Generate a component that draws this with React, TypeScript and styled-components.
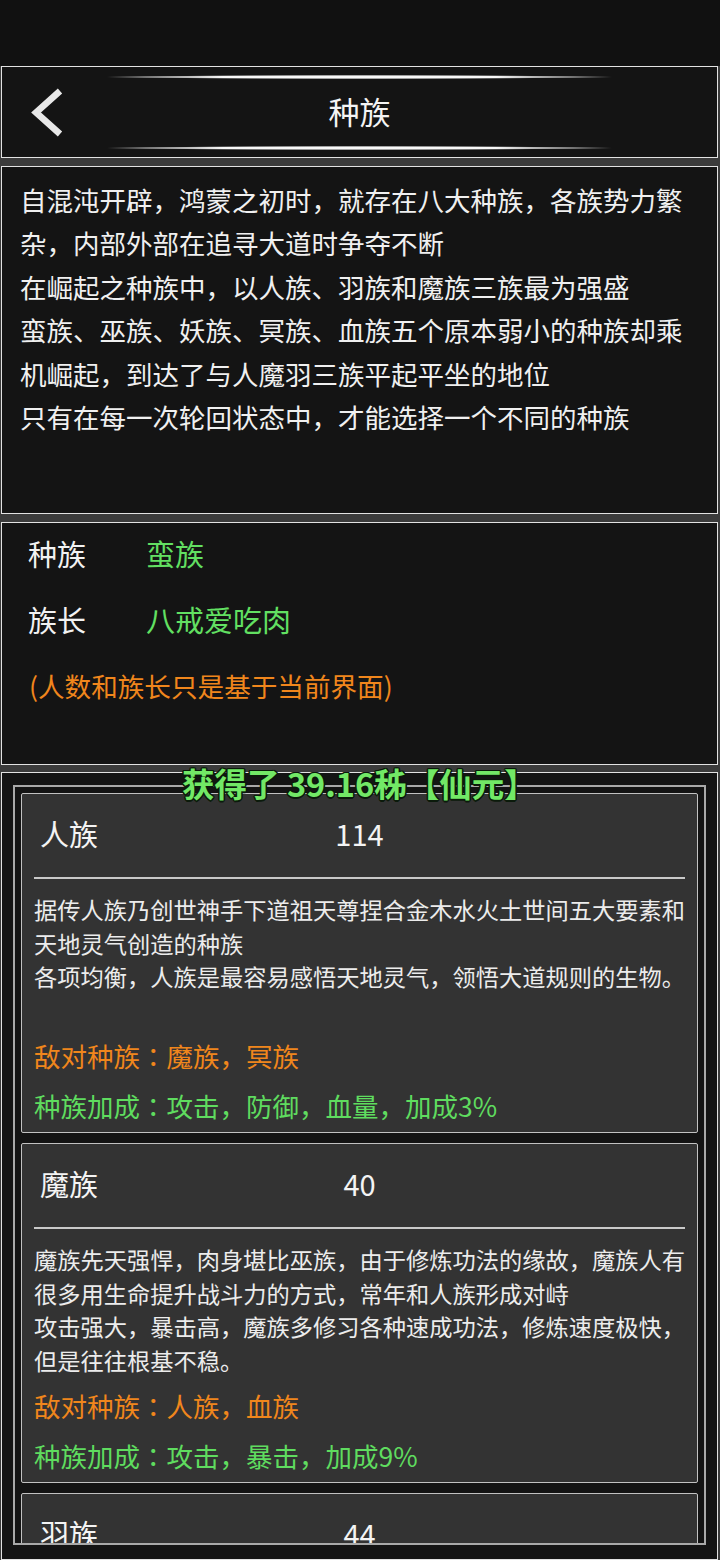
import React from 'react';
import styled, { createGlobalStyle } from 'styled-components';

const Global = createGlobalStyle`
  html, body { margin: 0; padding: 0; background: #3b3b3b; }
  body { font-family: "Noto Sans CJK SC", "Noto Sans", sans-serif; color: #f0f0f0; }
  * { box-sizing: border-box; }
`;

const Page = styled.div`
  width: 720px;
  height: 1560px;
  display: flex;
  flex-direction: column;
  overflow: hidden;
  background: #3b3b3b;
`;

const StatusBar = styled.div`
  flex: none;
  height: 66px;
  background: #111111;
`;

const Panel = styled.section<{ $h: number; $gap?: number }>`
  flex: none;
  position: relative;
  height: ${(p) => p.$h}px;
  margin: ${(p) => p.$gap ?? 0}px 2px 0 1px;
  background: #141414;
  border: 1px solid #e2e2e2;
`;

const HeaderGrid = styled.div`
  height: 100%;
  display: grid;
  grid-template-columns: 97px 1fr 97px;
`;

const BackButton = styled.button`
  align-self: center;
  justify-self: start;
  margin-left: 24px;
  padding: 0;
  border: 0;
  background: none;
  width: 50px;
  height: 60px;
  display: flex;
`;

const HeaderCenter = styled.div`
  display: flex;
  flex-direction: column;
  padding: 8px 0 7px;
`;

const GlowLine = styled.div`
  flex: none;
  height: 4px;
  background: radial-gradient(closest-side, #f8f8f8 58%, rgba(255, 255, 255, 0.4) 86%, rgba(255, 255, 255, 0) 100%);
`;

const Title = styled.h1`
  flex: 1;
  margin: 0;
  padding-bottom: 5px;
  display: flex;
  align-items: center;
  justify-content: center;
  font-size: 31px;
  font-weight: 400;
  color: #f4f4f4;
  line-height: 1;
`;

const Intro = styled.div`
  padding: 11px 10px 0 18px;
  font-size: 26.5px;
  line-height: 43.4px;
  color: #f0f0f0;
  white-space: nowrap;
`;

const InfoBody = styled.div`
  margin-top: -3px;
  padding: 0 0 0 26px;
  display: flex;
  flex-direction: column;
`;

const InfoRow = styled.div`
  height: 66px;
  display: flex;
  align-items: center;
  font-size: 29px;
`;

const InfoLabel = styled.span`
  width: 118px;
  color: #f2f2f2;
`;

const InfoValue = styled.span`
  color: #62e062;
`;

const Note = styled.div`
  height: 66px;
  display: flex;
  align-items: center;
  padding-left: 1px;
  font-size: 26.6px;
  color: #f0861c;
`;

const ListBody = styled.div`
  padding: 12px 11px 0;
`;

const Frame = styled.div`
  height: 760px;
  border: 2px solid #a9a9a9;
  padding: 6px;
  overflow: hidden;
  display: flex;
  flex-direction: column;
  gap: 10px;
`;

const Card = styled.div`
  flex: none;
  background: #333333;
  border: 1px solid #c2c2c2;
  border-radius: 2px;
  padding: 0 12px 2px;
`;

const CardHead = styled.div`
  height: 83px;
  padding-bottom: 5px;
  display: grid;
  grid-template-columns: 1fr auto 1fr;
  align-items: center;
  font-size: 29px;
  color: #f4f4f4;
`;

const RaceName = styled.span`
  padding-left: 6px;
`;

const RaceCount = styled.span`
  text-align: center;
`;

const Divider = styled.div`
  height: 2px;
  background: #c9c9c9;
`;

const CardDesc = styled.div`
  margin: 14px 0 3px;
  min-height: 134px;
  font-size: 23.25px;
  line-height: 33.5px;
  color: #ececec;
  white-space: nowrap;
`;

const Stat = styled.div<{ $tone: 'enemy' | 'bonus' }>`
  height: 50px;
  display: flex;
  align-items: center;
  font-size: 26.5px;
  white-space: pre;
  color: ${(p) => (p.$tone === 'enemy' ? '#f0861c' : '#5fdc5f')};
`;

const Colon = styled.span`
  font-family: "Noto Sans CJK JP", "Noto Sans CJK SC", sans-serif;
`;

const Toast = styled.div`
  position: absolute;
  top: -7px;
  left: 180px;
  font-size: 32.5px;
  font-weight: 700;
  line-height: 33px;
  color: #72e866;
  white-space: nowrap;
  text-shadow:
    1.5px 0 0 #0b1a0b, -1.5px 0 0 #0b1a0b, 0 1.5px 0 #0b1a0b, 0 -1.5px 0 #0b1a0b,
    1px 1px 0 #0b1a0b, -1px -1px 0 #0b1a0b, 1px -1px 0 #0b1a0b, -1px 1px 0 #0b1a0b;
`;

const introLines = [
  '自混沌开辟，鸿蒙之初时，就存在八大种族，各族势力繁',
  '杂，内部外部在追寻大道时争夺不断',
  '在崛起之种族中，以人族、羽族和魔族三族最为强盛',
  '蛮族、巫族、妖族、冥族、血族五个原本弱小的种族却乘',
  '机崛起，到达了与人魔羽三族平起平坐的地位',
  '只有在每一次轮回状态中，才能选择一个不同的种族',
];

type Race = { name: string; count: number; desc: string[]; enemy: string; bonus: string };

const races: Race[] = [
  {
    name: '人族',
    count: 114,
    desc: [
      '据传人族乃创世神手下道祖天尊捏合金木水火土世间五大要素和',
      '天地灵气创造的种族',
      '各项均衡，人族是最容易感悟天地灵气，领悟大道规则的生物。',
    ],
    enemy: '魔族，冥族',
    bonus: '攻击，防御，血量，加成3%',
  },
  {
    name: '魔族',
    count: 40,
    desc: [
      '魔族先天强悍，肉身堪比巫族，由于修炼功法的缘故，魔族人有',
      '很多用生命提升战斗力的方式，常年和人族形成对峙',
      '攻击强大，暴击高，魔族多修习各种速成功法，修炼速度极快，',
      '但是往往根基不稳。',
    ],
    enemy: '人族，血族',
    bonus: '攻击，暴击，加成9%',
  },
  {
    name: '羽族',
    count: 44,
    desc: ['羽族天生双翼，身法灵动，擅长远程攻击与闪避。'],
    enemy: '妖族',
    bonus: '闪避，速度，加成6%',
  },
];

function Chevron() {
  return (
    <svg width="50" height="60" viewBox="0 0 50 60">
      <polyline
        points="34,9 10,30.5 34,52"
        fill="none"
        stroke="#e8e8e8"
        strokeWidth="6.5"
        strokeLinecap="butt"
        strokeLinejoin="miter"
      />
    </svg>
  );
}

export default function App() {
  return (
    <>
      <Global />
      <Page>
        <StatusBar />
        <Panel $h={92}>
          <HeaderGrid>
            <BackButton aria-label="返回">
              <Chevron />
            </BackButton>
            <HeaderCenter>
              <GlowLine />
              <Title>种族</Title>
              <GlowLine />
            </HeaderCenter>
            <div />
          </HeaderGrid>
        </Panel>
        <Panel $h={348} $gap={8}>
          <Intro>
            {introLines.map((l, i) => (
              <div key={i}>{l}</div>
            ))}
          </Intro>
        </Panel>
        <Panel $h={243} $gap={8}>
          <InfoBody>
            <InfoRow>
              <InfoLabel>种族</InfoLabel>
              <InfoValue>蛮族</InfoValue>
            </InfoRow>
            <InfoRow>
              <InfoLabel>族长</InfoLabel>
              <InfoValue>八戒爱吃肉</InfoValue>
            </InfoRow>
            <Note>(人数和族长只是基于当前界面)</Note>
          </InfoBody>
        </Panel>
        <Panel $h={788} $gap={7}>
          <ListBody>
            <Frame>
              {races.map((r) => (
                <Card key={r.name}>
                  <CardHead>
                    <RaceName>{r.name}</RaceName>
                    <RaceCount>{r.count}</RaceCount>
                    <span />
                  </CardHead>
                  <Divider />
                  <CardDesc>
                    {r.desc.map((d, i) => (
                      <div key={i}>{d}</div>
                    ))}
                  </CardDesc>
                  <Stat $tone="enemy">
                    敌对种族<Colon>：</Colon>
                    {r.enemy}
                  </Stat>
                  <Stat $tone="bonus">
                    种族加成<Colon>：</Colon>
                    {r.bonus}
                  </Stat>
                </Card>
              ))}
            </Frame>
          </ListBody>
          <Toast>获得了 39.16秭【仙元】</Toast>
        </Panel>
      </Page>
    </>
  );
}
